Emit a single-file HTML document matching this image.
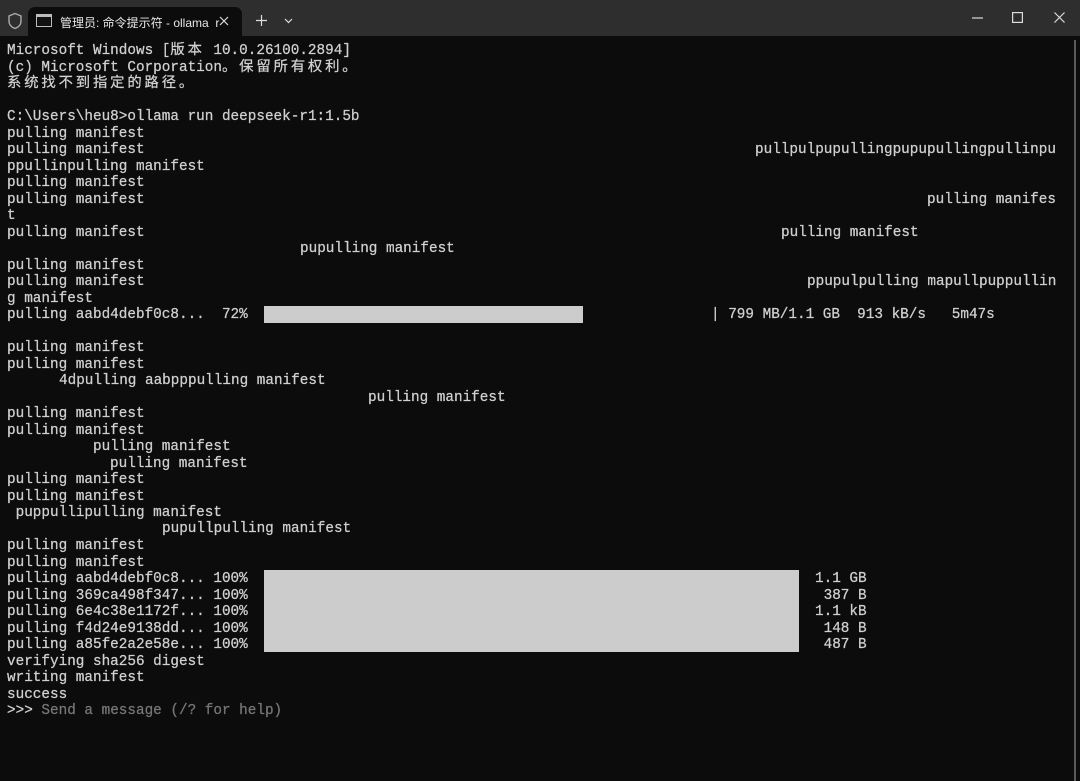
<!DOCTYPE html>
<html><head><meta charset="utf-8"><style>
html,body{margin:0;padding:0;width:1080px;height:781px;overflow:hidden;background:#0c0c0c;}
.tb{position:absolute;left:0;top:0;width:1080px;height:36px;background:#2e2e2e;}
.tab{position:absolute;left:28px;top:7px;width:214px;height:29px;background:#0c0c0c;border-radius:7px 7px 0 0;}
.tt{position:absolute;left:60px;top:14px;font:12px "Liberation Sans","Noto Sans CJK SC",sans-serif;color:#e8e8e8;}
.l{position:absolute;font:14.33px/16.5px "Liberation Mono","Noto Sans CJK SC",monospace;color:#d0d0d0;white-space:pre;-webkit-text-stroke:0.25px #d0d0d0;}
.c{display:inline-block;width:17.2px;text-align:left;}
.bar{position:absolute;background:#cccccc;}
.g{color:#767676;-webkit-text-stroke:0.25px #767676;}
</style></head><body>
<div class="tb"></div>
<svg style="position:absolute;left:7px;top:12px" width="16" height="18" viewBox="0 0 16 18"><path d="M8 1.5 L14 4 V9 C14 13 11 15.5 8 16.5 C5 15.5 2 13 2 9 V4 Z" fill="none" stroke="#aaa" stroke-width="1.4"/></svg>
<div class="tab"></div>
<svg style="position:absolute;left:36px;top:14px" width="16" height="14"><rect x="0.5" y="0.5" width="15" height="12" fill="#111" stroke="#bbb"/><rect x="1" y="1" width="14" height="2" fill="#bbb"/></svg>
<div class="tt">管理员: 命令提示符 - ollama &nbsp;r</div>
<svg style="position:absolute;left:219px;top:16px" width="10" height="10"><path d="M1 1L9 9M9 1L1 9" stroke="#ddd" stroke-width="1.2"/></svg>
<svg style="position:absolute;left:256px;top:15px" width="11" height="11"><path d="M5.5 0V11M0 5.5H11" stroke="#ddd" stroke-width="1.2"/></svg>
<svg style="position:absolute;left:284px;top:18px" width="9" height="6"><path d="M1 1L4.5 4.5L8 1" fill="none" stroke="#ddd" stroke-width="1.2"/></svg>
<svg style="position:absolute;left:972px;top:17px" width="11" height="2"><path d="M0 1H11" stroke="#ddd" stroke-width="1.2"/></svg>
<svg style="position:absolute;left:1012px;top:12px" width="11" height="11"><rect x="0.6" y="0.6" width="9.8" height="9.8" fill="none" stroke="#ddd" stroke-width="1.2"/></svg>
<svg style="position:absolute;left:1054px;top:12px" width="11" height="11"><path d="M0.5 0.5L10.5 10.5M10.5 0.5L0.5 10.5" stroke="#ddd" stroke-width="1.2"/></svg>
<div style="position:absolute;left:1074px;top:40px;width:2px;height:741px;background:#5a5a5a"></div>

<div class="l" style="left:7px;top:43px">Microsoft Windows [<span class="c">版</span><span class="c">本</span> 10.0.26100.2894]
(c) Microsoft Corporation<span class="c">。</span><span class="c">保</span><span class="c">留</span><span class="c">所</span><span class="c">有</span><span class="c">权</span><span class="c">利</span><span class="c">。</span>
<span class="c">系</span><span class="c">统</span><span class="c">找</span><span class="c">不</span><span class="c">到</span><span class="c">指</span><span class="c">定</span><span class="c">的</span><span class="c">路</span><span class="c">径</span><span class="c">。</span>

C:\Users\heu8>ollama run deepseek-r1:1.5b
pulling manifest
pulling manifest
ppullinpulling manifest
pulling manifest
pulling manifest
t
pulling manifest

pulling manifest
pulling manifest
g manifest
pulling aabd4debf0c8...  72%

pulling manifest
pulling manifest


pulling manifest
pulling manifest


pulling manifest
pulling manifest
 puppullipulling manifest

pulling manifest
pulling manifest
pulling aabd4debf0c8... 100%
pulling 369ca498f347... 100%
pulling 6e4c38e1172f... 100%
pulling f4d24e9138dd... 100%
pulling a85fe2a2e58e... 100%
verifying sha256 digest
writing manifest
success
&gt;&gt;&gt; <span class="g">Send a message (/? for help)</span></div>

<div class="l" style="left:755px;top:142px">pullpulpupullingpupupullingpullinpu</div>
<div class="l" style="left:927px;top:192px">pulling manifes</div>
<div class="l" style="left:781px;top:225px">pulling manifest</div>
<div class="l" style="left:300px;top:241px">pupulling manifest</div>
<div class="l" style="left:807px;top:274px">ppupulpulling mapullpuppullin</div>
<div class="bar" style="left:264px;top:306px;width:319px;height:17px"></div>
<div class="l" style="left:711px;top:307px">| 799 MB/1.1 GB  913 kB/s   5m47s</div>
<div class="l" style="left:59px;top:373px">4dpulling aabpppulling manifest</div>
<div class="l" style="left:368px;top:390px">pulling manifest</div>
<div class="l" style="left:93px;top:439px">pulling manifest</div>
<div class="l" style="left:110px;top:456px">pulling manifest</div>
<div class="l" style="left:162px;top:521px">pupullpulling manifest</div>
<div class="bar" style="left:264px;top:570px;width:535px;height:82px"></div>
<div class="l" style="left:815px;top:571px">1.1 GB
 387 B
1.1 kB
 148 B
 487 B</div>
</body></html>
